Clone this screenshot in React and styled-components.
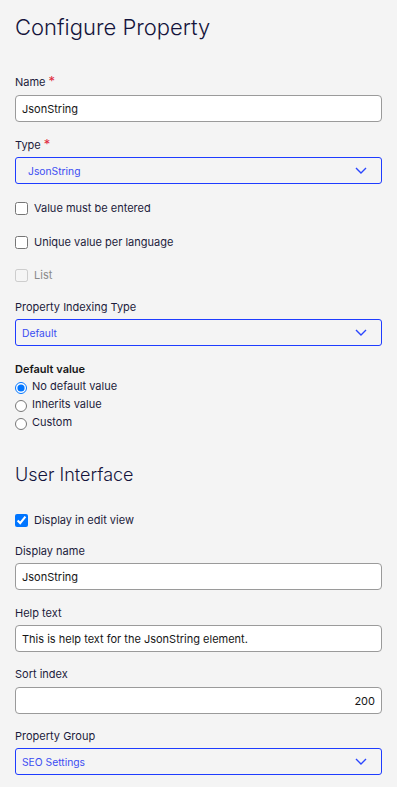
import React from "react";
import styled, { createGlobalStyle } from "styled-components";

const GlobalStyle = createGlobalStyle`
  html, body {
    margin: 0;
    padding: 0;
    background: #f4f4f4;
    font-family: Inter, "Noto Sans", sans-serif;
    color: #1c1c3c;
  }
`;

const Page = styled.div`
  padding: 12px 15px 12px;
  width: 367px;
`;

const Title = styled.h1`
  margin: 0;
  font-size: 22px;
  line-height: 30px;
  font-weight: 300;
  color: #14143c;
`;

const SectionTitle = styled.h2`
  margin: 29px 0 0;
  font-size: 18px;
  line-height: 30px;
  font-weight: 300;
  color: #14143c;
`;

const Field = styled.div`
  margin-top: ${p => p.$top || 14}px;
  display: flex;
  flex-direction: column;
`;

const Label = styled.label`
  font-size: 11px;
  line-height: 16px;
  color: #1c1c3c;
  margin-bottom: ${p => p.$gap || 4}px;
`;

const Required = styled.span`
  color: #e0283c;
  margin-left: 3px;
  font-size: 13px;
`;

const TextInput = styled.div`
  box-sizing: border-box;
  height: 27px;
  border: 1px solid #9a9a9a;
  border-radius: 4px;
  background: #fff;
  padding: 0 6px;
  display: flex;
  align-items: center;
  justify-content: ${p => (p.$right ? "flex-end" : "flex-start")};
  font-size: 11px;
  color: #161616;
`;

const Select = styled.div`
  box-sizing: border-box;
  height: 27px;
  border: 1px solid #1f3cff;
  border-radius: 3px;
  background: #f4f4f4;
  padding: 0 14px 0 ${p => p.$indent || 6}px;
  display: flex;
  align-items: center;
  justify-content: space-between;
  font-size: 10.3px;
  color: #3b4df2;
`;

const CheckRow = styled.label`
  display: flex;
  align-items: center;
  gap: 6px;
  height: 16px;
  margin-top: ${p => p.$top || 17}px;
  font-size: 11px;
  color: ${p => (p.$disabled ? "#8a8a8a" : "#1c1c3c")};
  input {
    margin: 0;
    width: 13px;
    height: 13px;
  }
`;

const GroupTitle = styled.div`
  margin-top: 15px;
  font-size: 11px;
  line-height: 16px;
  font-weight: 600;
  color: #161616;
`;

const RadioList = styled.div`
  display: flex;
  flex-direction: column;
`;

const RadioRow = styled.label`
  display: flex;
  align-items: center;
  gap: 5px;
  height: 18px;
  font-size: 11px;
  color: #1c1c3c;
  input {
    margin: 4px 0 0;
    width: 12px;
    height: 12px;
  }
`;

function Chevron() {
  return (
    <svg width="12" height="7" viewBox="0 0 12 7" fill="none">
      <path d="M1 1l5 5 5-5" stroke="#2a46ff" strokeWidth="1.4" />
    </svg>
  );
}

function SelectBox(props) {
  return (
    <Select $indent={props.indent}>
      <span>{props.value}</span>
      <Chevron />
    </Select>
  );
}

export default function App() {
  return (
    <Page>
      <GlobalStyle />
      <Title>Configure Property</Title>

      <Field $top={31}>
        <Label $gap={5}>
          Name<Required>*</Required>
        </Label>
        <TextInput>JsonString</TextInput>
      </Field>

      <Field>
        <Label>
          Type<Required>*</Required>
        </Label>
        <SelectBox value="JsonString" indent={12} />
      </Field>

      <CheckRow $top={16}>
        <input type="checkbox" readOnly />
        Value must be entered
      </CheckRow>
      <CheckRow $top={18}>
        <input type="checkbox" readOnly />
        Unique value per language
      </CheckRow>
      <CheckRow $disabled>
        <input type="checkbox" disabled />
        List
      </CheckRow>

      <Field $top={16}>
        <Label>Property Indexing Type</Label>
        <SelectBox value="Default" />
      </Field>

      <GroupTitle>Default value</GroupTitle>
      <RadioList>
        <RadioRow>
          <input type="radio" name="dv" defaultChecked />
          No default value
        </RadioRow>
        <RadioRow>
          <input type="radio" name="dv" />
          Inherits value
        </RadioRow>
        <RadioRow>
          <input type="radio" name="dv" />
          Custom
        </RadioRow>
      </RadioList>

      <SectionTitle>User Interface</SectionTitle>

      <CheckRow $top={22}>
        <input type="checkbox" defaultChecked />
        Display in edit view
      </CheckRow>

      <Field $top={15}>
        <Label>Display name</Label>
        <TextInput>JsonString</TextInput>
      </Field>

      <Field $top={15}>
        <Label>Help text</Label>
        <TextInput>This is help text for the JsonString element.</TextInput>
      </Field>

      <Field>
        <Label $gap={5}>Sort index</Label>
        <TextInput $right>200</TextInput>
      </Field>

      <Field>
        <Label>Property Group</Label>
        <SelectBox value="SEO Settings" />
      </Field>
    </Page>
  );
}
